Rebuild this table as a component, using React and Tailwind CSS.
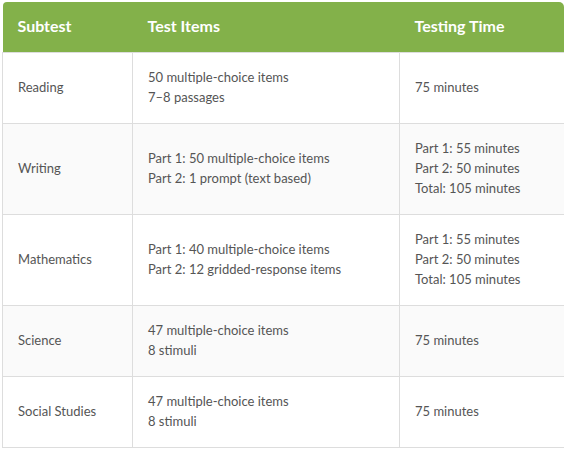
import React from 'react';

const rows = [
    { subtest: 'Reading', items: ['50 multiple-choice items', '7–8 passages'], time: ['75 minutes'] },
    { subtest: 'Writing', items: ['Part 1: 50 multiple-choice items', 'Part 2: 1 prompt (text based)'], time: ['Part 1: 55 minutes', 'Part 2: 50 minutes', 'Total: 105 minutes'] },
    { subtest: 'Mathematics', items: ['Part 1: 40 multiple-choice items', 'Part 2: 12 gridded-response items'], time: ['Part 1: 55 minutes', 'Part 2: 50 minutes', 'Total: 105 minutes'] },
    { subtest: 'Science', items: ['47 multiple-choice items', '8 stimuli'], time: ['75 minutes'] },
    { subtest: 'Social Studies', items: ['47 multiple-choice items', '8 stimuli'], time: ['75 minutes'] },
];

export default function App() {
    return (
        <div className="w-[566px] h-[450px] bg-white pt-[2px] pl-[2px]" style={{ fontFamily: 'Lato, "Open Sans", sans-serif' }}>
            <table className="w-[562px] border-collapse table-fixed">
                <colgroup>
                    <col className="w-[130px]" />
                    <col className="w-[267px]" />
                    <col />
                </colgroup>
                <thead>
                    <tr className="bg-[#83b14a] text-white text-[16px] font-bold leading-5 text-left">
                        <th className="rounded-tl-[4px] pl-[15px] pr-4 pt-[14px] pb-[16px] font-bold">Subtest</th>
                        <th className="pl-[15px] pr-4 pt-[14px] pb-[16px] font-bold">Test Items</th>
                        <th className="rounded-tr-[5px] pl-[15px] pr-4 pt-[14px] pb-[16px] font-bold">Testing Time</th>
                    </tr>
                </thead>
                <tbody className="text-[13px] leading-5 text-[#555]">
                    {rows.map((r, i) => (
                        <tr key={r.subtest} className={i % 2 === 1 ? 'bg-[#fafafa]' : 'bg-white'}>
                            <td className="border border-[#dddddd] border-r-0 pl-[15px] pr-4 pt-[14px] pb-[16px] align-middle">{r.subtest}</td>
                            <td className="border border-[#dddddd] pl-[15px] pr-4 pt-[14px] pb-[16px] align-middle">
                                {r.items.map(t => <div key={t}>{t}</div>)}
                            </td>
                            <td className="border-y border-l border-[#dddddd] pl-[15px] pr-4 pt-[14px] pb-[16px] align-middle">
                                {r.time.map(t => <div key={t}>{t}</div>)}
                            </td>
                        </tr>
                    ))}
                </tbody>
            </table>
        </div>
    );
}
